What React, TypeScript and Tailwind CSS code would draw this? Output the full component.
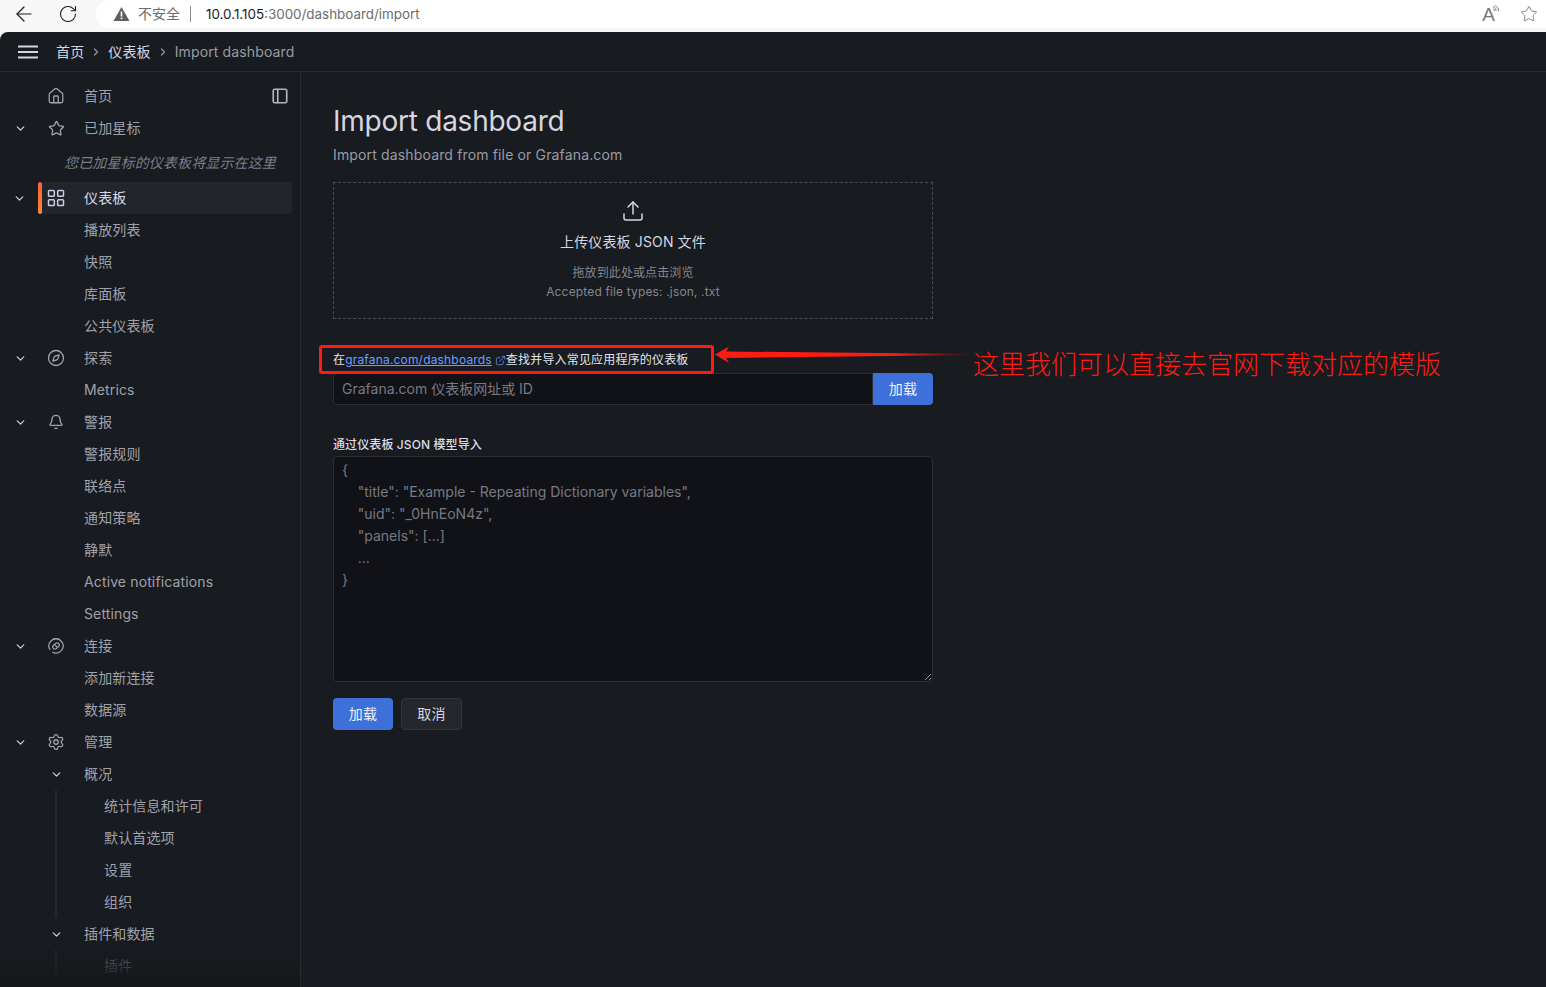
import React from 'react';
import { ArrowLeft, RotateCw, Star, ChevronRight, ChevronDown, House, PanelLeft, LayoutGrid, Compass, Bell, Settings, Upload, ExternalLink } from 'lucide-react';

const FONT = "font-['Inter','Noto_Sans_CJK_SC',sans-serif]";

const ConnectionIcon: React.FC = () => (
  <svg width="16" height="16" viewBox="0 0 16 16" fill="none" stroke="currentColor" strokeWidth="1.2">
    <path d="M11.800 2.100A7 7 0 0 0 2.100 11.800" />
    <path d="M4.500 1.900A7 7 0 0 1 14.100 11.500 7 7 0 0 1 4.300 14" />
    <rect x="4.400" y="5.800" width="7.200" height="4.400" rx="2.200" transform="rotate(-40 8 8)" />
    <path d="M6.500 6.300l3 3.400" />
  </svg>
);

type NavItem = {
  label: string;
  icon?: React.ReactNode;
  chevron?: boolean;
};

const Row: React.FC<{ item: NavItem }> = ({ item }) => (
  <div className="h-8 flex items-center">
    <div className="w-10 flex justify-center text-[#ccccdc] shrink-0">
      {item.chevron && <ChevronDown size={13} strokeWidth={2.4} />}
    </div>
    <div className="w-8 flex justify-center text-[#a3a3ab] shrink-0">{item.icon}</div>
    <span className="ml-3 text-sm text-[#a0a1ab]">{item.label}</span>
  </div>
);

const SubRow: React.FC<{ label: string; dim?: boolean }> = ({ label, dim }) => (
  <div className={`h-8 flex items-center pl-[104px] text-sm ${dim ? 'text-[#5f6069]' : 'text-[#a0a1ab]'}`}>{label}</div>
);

const Sidebar: React.FC = () => {
  const group1: NavItem[] = [
    { label: '播放列表' },
    { label: '快照' },
    { label: '库面板' },
    { label: '公共仪表板' },
    { label: '探索', chevron: true, icon: <Compass size={18} strokeWidth={1.7} /> },
    { label: 'Metrics' },
    { label: '警报', chevron: true, icon: <Bell size={16} strokeWidth={2} /> },
    { label: '警报规则' },
    { label: '联络点' },
    { label: '通知策略' },
    { label: '静默' },
    { label: 'Active notifications' },
    { label: 'Settings' },
    { label: '连接', chevron: true, icon: <ConnectionIcon /> },
    { label: '添加新连接' },
    { label: '数据源' },
    { label: '管理', chevron: true, icon: <Settings size={18} strokeWidth={1.7} /> },
  ];

  return (
    <aside className="w-[301px] shrink-0 border-r border-[#2a2c31] pt-2 relative overflow-hidden">
      <div className="relative">
        <Row item={{ label: '首页', icon: <House size={18} strokeWidth={1.7} /> }} />
        <PanelLeft size={18} strokeWidth={2.2} className="absolute right-[11px] top-[7px] text-[#b4b5bd]" />
      </div>
      <Row item={{ label: '已加星标', chevron: true, icon: <Star size={17} strokeWidth={1.8} /> }} />
      <div className="h-[38px] flex items-center pl-[64px] text-sm italic text-[#7d7e87]">您已加星标的仪表板将显示在这里</div>

      <div className="h-8 flex items-center mr-[8px]">
        <div className="w-[38px] flex justify-center text-[#ccccdc] shrink-0">
          <ChevronDown size={13} strokeWidth={2.4} />
        </div>
        <div className="flex-1 h-8 flex items-center bg-[#22252b] rounded-sm">
          <div className="w-1 h-8 rounded-sm bg-gradient-to-b from-[#f55f3e] to-[#ff8833] shrink-0" />
          <div className="w-[28px] flex justify-center text-[#ccccdc] shrink-0">
            <LayoutGrid size={20} strokeWidth={1.8} />
          </div>
          <span className="ml-[14px] text-sm text-[#d8d9e3]">仪表板</span>
        </div>
      </div>

      {group1.map((item) => <Row key={item.label} item={item} />)}

      <div className="h-8 flex items-center pl-[50px]">
        <ChevronDown size={13} strokeWidth={2.4} className="text-[#ccccdc] shrink-0" />
        <span className="ml-[21px] text-sm text-[#a0a1ab]">概况</span>
      </div>
      <div className="relative">
        <div className="absolute left-[55px] top-0 bottom-0 w-[2px] bg-[#26282d]" />
        {['统计信息和许可', '默认首选项', '设置', '组织'].map((l) => <SubRow key={l} label={l} />)}
      </div>
      <div className="h-8 flex items-center pl-[50px]">
        <ChevronDown size={13} strokeWidth={2.4} className="text-[#ccccdc] shrink-0" />
        <span className="ml-[21px] text-sm text-[#a0a1ab]">插件和数据</span>
      </div>
      <div className="relative">
        <div className="absolute left-[55px] top-0 bottom-0 w-[2px] bg-[#26282d]" />
        <SubRow label="插件" dim />
      </div>
      <div className="absolute left-0 right-0 bottom-0 h-10 bg-gradient-to-b from-transparent to-[#15171b]" />
    </aside>
  );
};

const Main: React.FC = () => (
  <main className="flex-1 pl-8 pt-8 relative">
    <div className="w-[600px]">
      <h1 className="text-[28px] leading-[34px] tracking-[-0.25px] text-[#d5d6e0]">Import dashboard</h1>
      <p className="mt-[6px] text-sm leading-[22px] tracking-[0.15px] text-[#9a9ba5]">Import dashboard from file or Grafana.com</p>

      <div className="mt-4 h-[137px] border border-dashed border-[#4a4c52] flex flex-col items-center pt-[16px]">
        <Upload size={24} strokeWidth={1.5} className="text-[#d5d6e0]" />
        <div className="mt-[8px] text-sm leading-[22px] text-[#d5d6e0]">上传仪表板 JSON 文件</div>
        <div className="mt-[10px] text-xs leading-5 tracking-[0.1px] text-[#868790]">拖放到此处或点击浏览</div>
        <div className="-mt-px text-xs leading-[20px] tracking-[0.15px] text-[#868790]">Accepted file types: .json, .txt</div>
      </div>

      <div className="mt-[30px] mb-[2px] h-[22px] flex items-center text-xs tracking-[0.18px] text-[#e3e4ec]">
        在<span className="text-[#6e9fff] underline">grafana.com/dashboards</span>
        <ExternalLink size={11} strokeWidth={1.5} className="ml-[3px] text-[#6e9fff]" />
        查找并导入常见应用程序的仪表板
      </div>

      <div className="flex h-8">
        <div className="flex-1 bg-[#111217] border border-[#2c2e33] rounded-l-sm flex items-center pl-2 text-sm tracking-normal text-[#787982]">
          Grafana.com 仪表板网址或 ID
        </div>
        <button className="w-[60px] bg-[#3d71d9] rounded-r-sm text-[#f3f4fa] text-sm">加载</button>
      </div>

      <label className="block mt-[32px] text-xs leading-4 font-medium tracking-[0.1px] text-[#dcdde6]">通过仪表板 JSON 模型导入</label>
      <textarea
        className="block mt-[3px] w-[600px] h-[226px] bg-[#111217] border border-[#2c2e33] rounded-sm px-2 py-[2px] text-sm leading-[22px] tracking-normal text-[#ccccdc] placeholder:text-[#787982] outline-none"
        placeholder={'{\n    "title": "Example - Repeating Dictionary variables",\n    "uid": "_0HnEoN4z",\n    "panels": [...]\n    ...\n}'}
        readOnly
      />

      <div className="mt-4 flex gap-2">
        <button className="w-[60px] h-8 bg-[#3d71d9] rounded-sm text-sm text-[#f3f4fa]">加载</button>
        <button className="w-[61px] h-8 bg-[#25272c] border border-[#33353a] rounded-sm text-sm text-[#d5d6e0]">取消</button>
      </div>
    </div>

    {/* red markup drawn over the screenshot */}
    <div className="absolute left-[18px] top-[273px] w-[395px] h-[29px] border-[3px] border-[#ff1a12] rounded-[3px]" />
    <svg className="absolute left-[414px] top-[273px]" width="262" height="20" viewBox="0 0 262 20">
      <defs>
        <linearGradient id="arrowFade" x1="0" x2="1" y1="0" y2="0">
          <stop offset="0" stopColor="#ff1a12" />
          <stop offset="0.7" stopColor="#ff1a12" />
          <stop offset="1" stopColor="#ff1a12" stopOpacity="0" />
        </linearGradient>
      </defs>
      <path d="M0 9.500 L14 1.500 L11 6.500 L258 9 L258 10 L11 13 L14 18 Z" fill="url(#arrowFade)" />
    </svg>
    <div className="absolute left-[672px] top-[276px] text-[26px] leading-[34px] tracking-normal font-light text-[#ff1a12] whitespace-nowrap">
      这里我们可以直接去官网下载对应的模版
    </div>
  </main>
);

const App: React.FC = () => (
  <div className={`h-[987px] overflow-hidden bg-[#f7f7f7] flex flex-col tracking-[0.13px] ${FONT}`}>
    {/* browser bar */}
    <div className="h-8 shrink-0 flex items-start">
      <div className="h-7 w-[96px] bg-[#f7f7f7] flex items-center text-[#1f1f1f]">
        <ArrowLeft size={24} strokeWidth={1.2} className="ml-[12px]" />
        <RotateCw size={20} strokeWidth={1.3} className="ml-[22px]" />
      </div>
      <div className="h-7 flex-1 bg-white rounded-l-[14px] flex items-center pl-[17px] text-[13.400px] tracking-normal">
        <svg width="17" height="16" viewBox="0 0 17 16" className="shrink-0">
          <path d="M8.500 1 L16.500 15 H0.500 Z" fill="#5f5f5f" />
          <rect x="7.700" y="5.500" width="1.600" height="5" fill="#fff" />
          <rect x="7.700" y="11.500" width="1.600" height="1.700" fill="#fff" />
        </svg>
        <span className="ml-[8px] text-sm text-[#6c6c6c]">不安全</span>
        <div className="ml-[10px] w-px h-4 bg-[#8a8a8a]" />
        <span className="ml-[15px] text-[#1a1a1a]">10.0.1.105<span className="text-[#6c6c6c]">:3000/dashboard/import</span></span>
        <div className="ml-auto mr-[8px] flex items-center text-[#777]">
          <span className="text-[19px] font-['Liberation_Sans',sans-serif] leading-none">A</span>
          <svg width="8" height="10" viewBox="0 0 8 10" fill="none" stroke="currentColor" strokeWidth="1" className="mb-[8px] -ml-[3px]">
            <path d="M1 1.500c2 .8 3 2.500 3 4.500M1 3.800c1 .4 1.400 1.200 1.400 2.200M3 .5c2.300 1 3.500 3 3.500 5.500" />
          </svg>
          <Star size={18} strokeWidth={1.2} className="ml-[20px]" />
        </div>
      </div>
    </div>

    {/* app */}
    <div className="flex-1 min-h-0 bg-[#181b1f] rounded-tl-lg flex flex-col">
      <header className="h-10 shrink-0 border-b border-[#2a2c31] flex items-center text-sm">
        <svg width="20" height="14" viewBox="0 0 20 14" className="ml-[18px] text-[#d5d6e0]" stroke="currentColor" strokeWidth="1.800">
          <path d="M0 1.500h20M0 7h20M0 12.500h20" />
        </svg>
        <span className="ml-[18px] text-[#d5d6e0]">首页</span>
        <ChevronRight size={12} strokeWidth={2.4} className="mx-[5px] text-[#9a9ba5] ml-[6px]" />
        <span className="text-[#d5d6e0] ml-[1px]">仪表板</span>
        <ChevronRight size={12} strokeWidth={2.4} className="mx-[6px] text-[#9a9ba5]" />
        <span className="text-[#9a9ba5]">Import dashboard</span>
      </header>
      <div className="flex-1 min-h-0 flex">
        <Sidebar />
        <Main />
      </div>
    </div>
  </div>
);

export default App;
